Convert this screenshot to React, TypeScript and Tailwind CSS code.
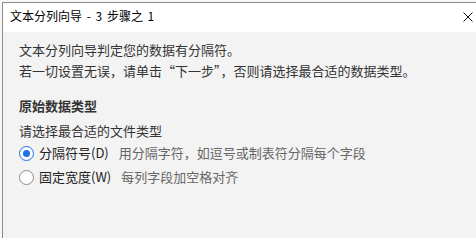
const font = { fontFamily: '"Noto Sans CJK SC", "Noto Sans", sans-serif' };

function Radio({ checked }: { checked: boolean }) {
  return checked ? (
    <span className="flex h-[15px] w-[15px] shrink-0 items-center justify-center rounded-full border-[1.5px] border-[#1a73e8] bg-white">
      <span className="h-[7px] w-[7px] rounded-full bg-[#1a73e8]" />
    </span>
  ) : (
    <span className="h-[15px] w-[15px] shrink-0 rounded-full border border-[#8a8a8a] bg-white" />
  );
}

export default function App() {
  const options = [
    { label: "分隔符号(D)", desc: "用分隔字符，如逗号或制表符分隔每个字段", checked: true },
    { label: "固定宽度(W)", desc: "每列字段加空格对齐", checked: false },
  ];

  return (
    <div className="h-[238px] w-[476px] overflow-hidden bg-[#f7f7f7] pl-[2px] pt-[2px]" style={font}>
      <div className="flex h-full flex-col border-l border-t border-[#8c8c8c]">
        <div className="flex h-[29px] shrink-0 items-center justify-between bg-white pb-[3px] pl-[7px] pr-[3px]">
          <span className="text-[12px] leading-none text-black [word-spacing:2px]">文本分列向导 - 3 步骤之 1</span>
          <svg width="10" height="10" viewBox="0 0 10 10" className="mt-[2px]">
            <path d="M0.5 0.5 L9.5 9.5 M9.5 0.5 L0.5 9.5" stroke="#111" strokeWidth="1" />
          </svg>
        </div>
        <div className="flex-1 bg-[#f3f3f3] pl-[16px] pt-[7px] text-[13px] text-[#333]">
          <p className="leading-[21px]">文本分列向导判定您的数据有分隔符。</p>
          <p className="leading-[21px]">若一切设置无误，请单击“下一步”，否则请选择最合适的数据类型。</p>
          <h4 className="mt-[14px] font-bold leading-[21px] text-[#333]">原始数据类型</h4>
          <p className="mt-[4px] leading-[21px]">请选择最合适的文件类型</p>
          <div className="mt-[1px] flex flex-col gap-[2px]">
            {options.map((o) => (
              <div key={o.label} className="flex h-[22px] items-center">
                <Radio checked={o.checked} />
                <span className="ml-[5px] text-[#222]">{o.label}</span>
                <span className="ml-[10px] text-[#666]">{o.desc}</span>
              </div>
            ))}
          </div>
        </div>
      </div>
    </div>
  );
}
